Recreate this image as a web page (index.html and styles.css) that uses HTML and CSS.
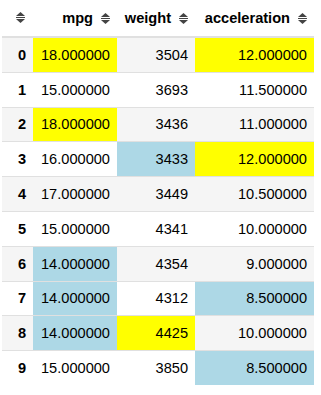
FILE: index.html
```html
<!DOCTYPE html>
<html>
<head>
<meta charset="utf-8">
<link rel="stylesheet" href="styles.css">
</head>
<body>
<table class="df">
  <colgroup>
    <col class="c-idx"><col class="c-mpg"><col class="c-wt"><col class="c-acc">
  </colgroup>
  <thead>
    <tr>
      <th class="idx-h"><span class="hd"><svg class="sort" viewBox="0 0 9 11"><polygon points="4.5,0 9,4 0,4"/><rect x="0" y="5" width="9" height="1"/><polygon points="0,7 9,7 4.5,11"/></svg></span></th>
      <th><span class="hd">mpg<svg class="sort" viewBox="0 0 9 11"><polygon points="4.5,0 9,4 0,4"/><rect x="0" y="5" width="9" height="1"/><polygon points="0,7 9,7 4.5,11"/></svg></span></th>
      <th><span class="hd">weight<svg class="sort" viewBox="0 0 9 11"><polygon points="4.5,0 9,4 0,4"/><rect x="0" y="5" width="9" height="1"/><polygon points="0,7 9,7 4.5,11"/></svg></span></th>
      <th><span class="hd">acceleration<svg class="sort" viewBox="0 0 9 11"><polygon points="4.5,0 9,4 0,4"/><rect x="0" y="5" width="9" height="1"/><polygon points="0,7 9,7 4.5,11"/></svg></span></th>
    </tr>
  </thead>
  <tbody>
    <tr><th>0</th><td class="hi">18.000000</td><td>3504</td><td class="hi">12.000000</td></tr>
    <tr><th>1</th><td>15.000000</td><td>3693</td><td>11.500000</td></tr>
    <tr><th>2</th><td class="hi">18.000000</td><td>3436</td><td>11.000000</td></tr>
    <tr><th>3</th><td>16.000000</td><td class="lo">3433</td><td class="hi">12.000000</td></tr>
    <tr><th>4</th><td>17.000000</td><td>3449</td><td>10.500000</td></tr>
    <tr><th>5</th><td>15.000000</td><td>4341</td><td>10.000000</td></tr>
    <tr><th>6</th><td class="lo">14.000000</td><td>4354</td><td>9.000000</td></tr>
    <tr><th>7</th><td class="lo">14.000000</td><td>4312</td><td class="lo">8.500000</td></tr>
    <tr><th>8</th><td class="lo">14.000000</td><td class="hi">4425</td><td>10.000000</td></tr>
    <tr><th>9</th><td>15.000000</td><td>3850</td><td class="lo">8.500000</td></tr>
  </tbody>
</table>
</body>
</html>
```

FILE: styles.css
```css
html, body {
  margin: 0;
  padding: 0;
  background: #fff;
}
body {
  padding-left: 2px;
  font-family: "Liberation Sans", Arial, sans-serif;
  font-size: 14.6px;
  color: #000;
}
.df {
  border-collapse: separate;
  border-spacing: 0;
  table-layout: fixed;
  width: 312px;
}
.c-idx { width: 31px; }
.c-mpg { width: 84px; }
.c-wt { width: 78px; }
.c-acc { width: 119px; }

.df thead th {
  height: 36px;
  padding: 0 7px;
  border-bottom: 2px solid #e0e0e0;
  text-align: right;
  vertical-align: middle;
  font-weight: bold;
  white-space: nowrap;
}
.df thead th.idx-h {
  padding-right: 8px;
}
.hd {
  display: inline-flex;
  align-items: center;
  gap: 8px;
}
.sort {
  width: 9px;
  height: 11px;
  fill: #444;
  display: block;
}
.df tbody th,
.df tbody td {
  height: 33.8px;
  padding: 0 7px;
  text-align: right;
  vertical-align: middle;
  border-bottom: 1px solid #e0e0e0;
  white-space: nowrap;
}
.df tbody tr:last-child th,
.df tbody tr:last-child td {
  border-bottom: none;
}
.df tbody th {
  font-weight: bold;
}
.df tbody tr:nth-child(odd) {
  background: #f5f5f5;
}
.df td.hi { background: #ffff00; }
.df td.lo { background: #add8e6; }
```
